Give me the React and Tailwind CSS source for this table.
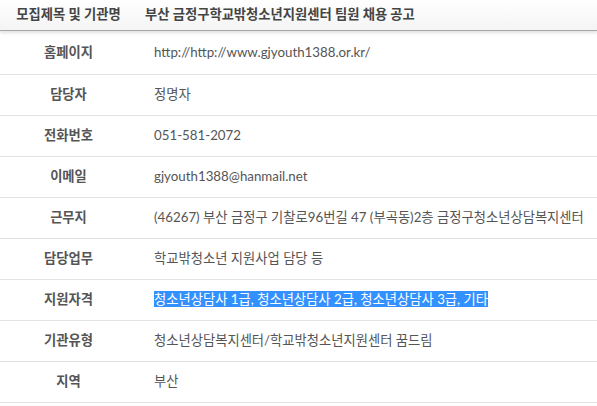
const ROWS = [
  ['홈페이지', 'http://http://www.gjyouth1388.or.kr/'],
  ['담당자', '정명자'],
  ['전화번호', '051-581-2072'],
  ['이메일', 'gjyouth1388@hanmail.net'],
  ['근무지', '(46267) 부산 금정구 기찰로96번길 47 (부곡동)2층 금정구청소년상담복지센터'],
  ['담당업무', '학교밖청소년 지원사업 담당 등'],
  ['지원자격', '청소년상담사 1급, 청소년상담사 2급, 청소년상담사 3급, 기타', true],
  ['기관유형', '청소년상담복지센터/학교밖청소년지원센터 꿈드림'],
  ['지역', '부산'],
];

export default function App() {
  return (
    <div className="w-[597px] h-[406px] overflow-hidden bg-white text-[13.3px] font-['Lato','Noto_Sans_CJK_KR',sans-serif]">
      {/* header */}
      <div className="h-[31px] flex items-center bg-gradient-to-b from-[#ffffff] to-[#f4f4f4] border-b border-[#a8a8a8] shadow-[0_2px_3px_rgba(0,0,0,0.12)] relative">
        <div className="w-[137px] shrink-0 text-center font-bold text-[#444]">모집제목 및 기관명</div>
        <div className="pl-[8px] font-bold text-[#444]">부산 금정구학교밖청소년지원센터 팀원 채용 공고</div>
      </div>
      <div>
        {ROWS.map(([label, value, selected], i) => (
          <div
            key={label}
            className={`flex items-center border-b border-[#e3e3e3] ${i === 0 ? 'h-[44px]' : 'h-[41px]'}`}
          >
            <div className="w-[137px] shrink-0 text-center font-bold text-[#555]">{label}</div>
            <div className="pl-[17px] text-[#555] whitespace-nowrap">
              {selected ? <span className="bg-[#3390ff] text-white">{value}</span> : value}
            </div>
          </div>
        ))}
      </div>
    </div>
  );
}
